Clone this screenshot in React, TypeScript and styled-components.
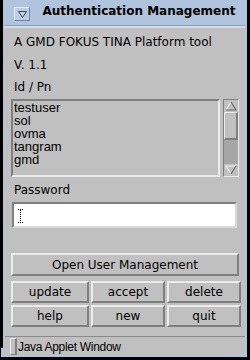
import React from "react";
import styled, { createGlobalStyle } from "styled-components";

const Global = createGlobalStyle`
  html, body { margin: 0; padding: 0; background: #000; }
  body { width: 250px; height: 360px; overflow: hidden; }
  * { box-sizing: border-box; }
`;

const BLUE = "#b0c4de";
const GRAY = "#c0c0c0";
const HI = "#ececec";
const SH = "#7f7f7f";

const Window = styled.div`
  position: relative;
  margin-left: 3px;
  width: 244px;
  height: 357px;
  background: ${GRAY};
  border-left: 1px solid ${BLUE};
  border-right: 2px solid ${BLUE};
  border-bottom: 1px solid ${BLUE};
  display: flex;
  flex-direction: column;
`;

const TitleBar = styled.div`
  height: 28px;
  background: ${BLUE};
  border-bottom: 2px solid #d0dcec;
  box-shadow: inset 0 -1px 0 #8ea3c3;
  display: flex;
  align-items: flex-start;
`;

const MenuButton = styled.div`
  margin: 7px 0 0 10px;
  width: 16px;
  height: 14px;
  background: #bccde4;
  border-top: 1px solid #e2eaf5;
  border-left: 1px solid #e2eaf5;
  border-right: 1px solid #6e83a4;
  border-bottom: 1px solid #6e83a4;
  display: flex;
  align-items: center;
  justify-content: center;
`;

const Title = styled.div`
  flex: 1;
  margin-left: 3px;
  padding-top: 4px;
  text-align: center;
  font: bold 12px/14px "DejaVu Sans", sans-serif;
  color: #000;
  white-space: nowrap;
`;

const Content = styled.div`
  padding-left: 7px;
  display: flex;
  flex-direction: column;
  align-items: flex-start;
`;

const Label = styled.div<{ $mt: number }>`
  margin-top: ${(p) => p.$mt}px;
  padding-left: 3px;
  height: 14px;
  font: 12px/14px "DejaVu Sans", sans-serif;
  color: #000;
  white-space: nowrap;
`;

const ListRow = styled.div`
  margin-top: 5px;
  display: flex;
  gap: 3px;
`;

const List = styled.div`
  width: 209px;
  height: 78px;
  border-top: 2px solid ${SH};
  border-left: 2px solid ${SH};
  border-right: 2px solid ${HI};
  border-bottom: 2px solid ${HI};
  padding-left: 1px;
  overflow: hidden;
`;

const Item = styled.div`
  font: 13px/13px "Liberation Sans", Arial, sans-serif;
  color: #000;
  height: 13px;
  white-space: nowrap;
`;

const ScrollBar = styled.div`
  width: 16px;
  height: 78px;
  background: #a6a6a6;
  border-top: 1px solid ${SH};
  border-left: 1px solid ${SH};
  border-right: 1px solid ${HI};
  border-bottom: 1px solid ${HI};
  display: flex;
  flex-direction: column;
`;

const Arrow = styled.div`
  height: 12px;
  background: ${GRAY};
  display: flex;
  align-items: center;
  justify-content: center;
`;

const Thumb = styled.div`
  height: 28px;
  background: ${GRAY};
  border-top: 1px solid ${HI};
  border-left: 1px solid ${HI};
  border-right: 2px solid ${SH};
  border-bottom: 2px solid ${SH};
`;

const Trough = styled.div`
  flex: 1;
`;

const Field = styled.div`
  margin-top: 5px;
  margin-left: 1px;
  width: 225px;
  height: 26px;
  background: #fff;
  border-top: 2px solid ${SH};
  border-left: 2px solid ${SH};
  border-right: 2px solid #dadada;
  border-bottom: 2px solid #dadada;
  padding: 5px 0 0 4px;
`;

const Button = styled.div<{ $w?: number }>`
  width: ${(p) => (p.$w ? `${p.$w}px` : "100%")};
  height: 100%;
  background: ${GRAY};
  border-top: 2px solid ${HI};
  border-left: 2px solid ${HI};
  border-right: 2px solid ${SH};
  border-bottom: 2px solid ${SH};
  display: flex;
  align-items: center;
  justify-content: center;
  font: 12px/14px "DejaVu Sans", sans-serif;
  color: #000;
  white-space: nowrap;
`;

const OpenWrap = styled.div`
  margin-top: 25px;
  width: 228px;
  height: 23px;
`;

const Grid = styled.div`
  margin-top: 5px;
  display: grid;
  grid-template-columns: 78px 74px 74px;
  grid-auto-rows: 22px;
  gap: 2px;
`;

const Separator = styled.div`
  margin-top: 9px;
  margin-left: 1px;
  height: 1px;
  background: #8a8a8a;
`;

const Status = styled.div`
  display: flex;
  align-items: flex-start;
  padding-left: 6px;
`;

const StatusBox = styled.div`
  margin-top: 1px;
  width: 7px;
  height: 17px;
  background: ${GRAY};
  border-top: 1px solid ${HI};
  border-left: 1px solid ${HI};
  border-right: 2px solid ${SH};
  border-bottom: 1px solid ${SH};
`;

const StatusText = styled.div`
  margin: 3px 0 0 1px;
  font: 12px/14px "Liberation Sans", Arial, sans-serif;
  letter-spacing: -0.3px;
  color: #000;
  white-space: nowrap;
`;

const Corner = styled.div<{ $side: "left" | "right" }>`
  position: absolute;
  bottom: -1px;
  ${(p) => (p.$side === "left" ? "left: -3px;" : "right: -2px;")}
  width: 10px;
  height: 9px;
  border-bottom: 2px solid ${BLUE};
  ${(p) =>
    p.$side === "left"
      ? `border-left: 2px solid ${BLUE};`
      : `border-right: 2px solid ${BLUE};`}
`;

const items = ["testuser", "sol", "ovma", "tangram", "gmd"];

const UpArrow = () => (
  <svg width="12" height="10" viewBox="0 0 12 10">
    <polyline points="1,9 6,1" stroke="#efefef" strokeWidth="1.2" fill="none" />
    <polyline points="6,1 11,9 1,9" stroke="#6a6a6a" strokeWidth="1.2" fill="none" />
  </svg>
);

const DownArrow = () => (
  <svg width="12" height="10" viewBox="0 0 12 10">
    <polyline points="11,1 1,1 6,9" stroke="#efefef" strokeWidth="1.2" fill="none" />
    <polyline points="6,9 11,1" stroke="#6a6a6a" strokeWidth="1.2" fill="none" />
  </svg>
);

const MenuGlyph = () => (
  <svg width="9" height="7" viewBox="0 0 9 7">
    <polygon points="0.5,0.5 8.5,0.5 4.5,6.5" stroke="#3c4a60" strokeWidth="1" fill="none" />
  </svg>
);

const Caret = () => (
  <svg width="5" height="14" viewBox="0 0 5 14">
    <line x1="0" y1="0.5" x2="5" y2="0.5" stroke="#000" strokeWidth="1" strokeDasharray="1 1" />
    <line x1="2.5" y1="1" x2="2.5" y2="13" stroke="#000" strokeWidth="1" strokeDasharray="1 1" />
    <line x1="0" y1="13.5" x2="5" y2="13.5" stroke="#000" strokeWidth="1" strokeDasharray="1 1" />
  </svg>
);

export default function App() {
  return (
    <>
      <Global />
      <Window>
        <TitleBar>
          <MenuButton>
            <MenuGlyph />
          </MenuButton>
          <Title>Authentication Management</Title>
        </TitleBar>
        <Content>
          <Label $mt={7}>A GMD FOKUS TINA Platform tool</Label>
          <Label $mt={9}>V. 1.1</Label>
          <Label $mt={8}>Id / Pn</Label>
          <ListRow>
            <List>
              {items.map((i) => (
                <Item key={i}>{i}</Item>
              ))}
            </List>
            <ScrollBar>
              <Arrow>
                <UpArrow />
              </Arrow>
              <Thumb />
              <Trough />
              <Arrow>
                <DownArrow />
              </Arrow>
            </ScrollBar>
          </ListRow>
          <Label $mt={6}>Password</Label>
          <Field>
            <Caret />
          </Field>
          <OpenWrap>
            <Button>Open User Management</Button>
          </OpenWrap>
          <Grid>
            <Button>update</Button>
            <Button>accept</Button>
            <Button>delete</Button>
            <Button>help</Button>
            <Button>new</Button>
            <Button>quit</Button>
          </Grid>
        </Content>
        <Separator />
        <Status>
          <StatusBox />
          <StatusText>Java Applet Window</StatusText>
        </Status>
        <Corner $side="left" />
        <Corner $side="right" />
      </Window>
    </>
  );
}
